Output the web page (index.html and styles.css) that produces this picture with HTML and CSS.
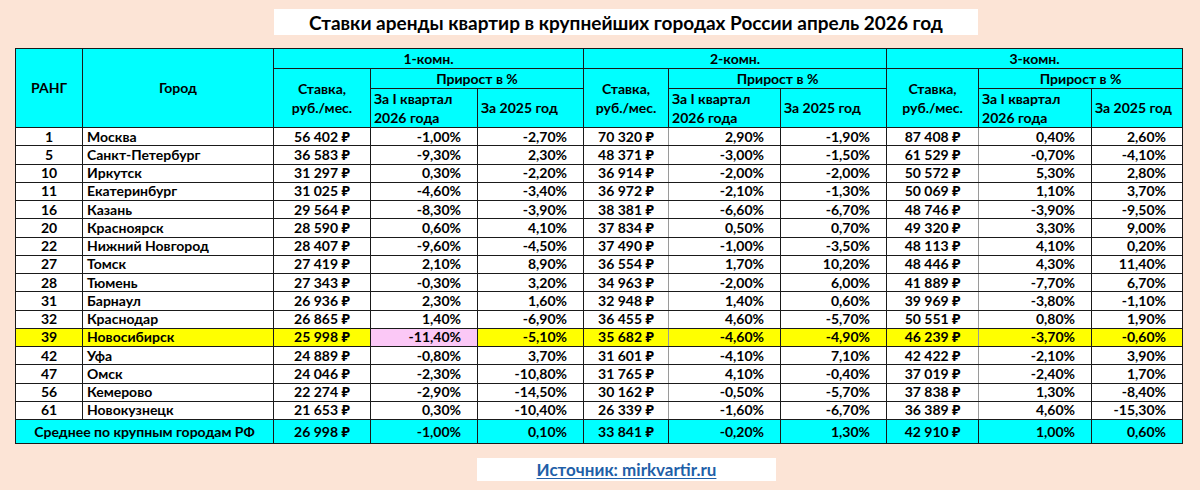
FILE: index.html
```html
<!DOCTYPE html>
<html lang="ru">
<head>
<meta charset="utf-8">
<title>Ставки аренды квартир</title>
<link rel="stylesheet" href="styles.css">
</head>
<body>
<div class="page">
  <div class="title">Ставки аренды квартир в крупнейших городах России апрель 2026 год</div>
  <table class="grid">
    <colgroup>
      <col style="width:67px"><col style="width:191px">
      <col style="width:97px"><col style="width:107px"><col style="width:106px">
      <col style="width:85px"><col style="width:112px"><col style="width:106px">
      <col style="width:92px"><col style="width:113px"><col style="width:91px">
    </colgroup>
    <thead>
      <tr class="h1">
        <th rowspan="3">РАНГ</th>
        <th rowspan="3">Город</th>
        <th colspan="3">1-комн.</th>
        <th colspan="3">2-комн.</th>
        <th colspan="3">3-комн.</th>
      </tr>
      <tr class="h2">
        <th rowspan="2" class="two">Ставка,<br>руб./мес.</th>
        <th colspan="2">Прирост в %</th>
        <th rowspan="2" class="two">Ставка,<br>руб./мес.</th>
        <th colspan="2">Прирост в %</th>
        <th rowspan="2" class="two">Ставка,<br>руб./мес.</th>
        <th colspan="2">Прирост в %</th>
      </tr>
      <tr class="h3">
        <th class="sub two">За I квартал<br>2026 года</th>
        <th class="sub">За 2025 год</th>
        <th class="sub two">За I квартал<br>2026 года</th>
        <th class="sub">За 2025 год</th>
        <th class="sub two">За I квартал<br>2026 года</th>
        <th class="sub">За 2025 год</th>
      </tr>
    </thead>
    <tbody>
      <tr><td class="rank">1</td><td class="city">Москва</td><td class="rate">56 402 ₽</td><td class="num">-1,00%</td><td class="num">-2,70%</td><td class="rate soft">70 320 ₽</td><td class="num">2,90%</td><td class="num">-1,90%</td><td class="rate soft">87 408 ₽</td><td class="num">0,40%</td><td class="num">2,60%</td></tr>
      <tr><td class="rank">5</td><td class="city">Санкт-Петербург</td><td class="rate">36 583 ₽</td><td class="num">-9,30%</td><td class="num">2,30%</td><td class="rate soft">48 371 ₽</td><td class="num">-3,00%</td><td class="num">-1,50%</td><td class="rate soft">61 529 ₽</td><td class="num">-0,70%</td><td class="num">-4,10%</td></tr>
      <tr><td class="rank">10</td><td class="city">Иркутск</td><td class="rate">31 297 ₽</td><td class="num">0,30%</td><td class="num">-2,20%</td><td class="rate soft">36 914 ₽</td><td class="num">-2,00%</td><td class="num">-2,00%</td><td class="rate soft">50 572 ₽</td><td class="num">5,30%</td><td class="num">2,80%</td></tr>
      <tr><td class="rank">11</td><td class="city">Екатеринбург</td><td class="rate">31 025 ₽</td><td class="num">-4,60%</td><td class="num">-3,40%</td><td class="rate soft">36 972 ₽</td><td class="num">-2,10%</td><td class="num">-1,30%</td><td class="rate soft">50 069 ₽</td><td class="num">1,10%</td><td class="num">3,70%</td></tr>
      <tr><td class="rank">16</td><td class="city">Казань</td><td class="rate">29 564 ₽</td><td class="num">-8,30%</td><td class="num">-3,90%</td><td class="rate soft">38 381 ₽</td><td class="num">-6,60%</td><td class="num">-6,70%</td><td class="rate soft">48 746 ₽</td><td class="num">-3,90%</td><td class="num">-9,50%</td></tr>
      <tr><td class="rank">20</td><td class="city">Красноярск</td><td class="rate">28 590 ₽</td><td class="num">0,60%</td><td class="num">4,10%</td><td class="rate soft">37 834 ₽</td><td class="num">0,50%</td><td class="num">0,70%</td><td class="rate soft">49 320 ₽</td><td class="num">3,30%</td><td class="num">9,00%</td></tr>
      <tr><td class="rank">22</td><td class="city">Нижний Новгород</td><td class="rate">28 407 ₽</td><td class="num">-9,60%</td><td class="num">-4,50%</td><td class="rate soft">37 490 ₽</td><td class="num">-1,00%</td><td class="num">-3,50%</td><td class="rate soft">48 113 ₽</td><td class="num">4,10%</td><td class="num">0,20%</td></tr>
      <tr><td class="rank">27</td><td class="city">Томск</td><td class="rate">27 419 ₽</td><td class="num">2,10%</td><td class="num">8,90%</td><td class="rate soft">36 554 ₽</td><td class="num">1,70%</td><td class="num">10,20%</td><td class="rate soft">48 446 ₽</td><td class="num">4,30%</td><td class="num">11,40%</td></tr>
      <tr><td class="rank">28</td><td class="city">Тюмень</td><td class="rate">27 343 ₽</td><td class="num">-0,30%</td><td class="num">3,20%</td><td class="rate soft">34 963 ₽</td><td class="num">-2,00%</td><td class="num">6,00%</td><td class="rate soft">41 889 ₽</td><td class="num">-7,70%</td><td class="num">6,70%</td></tr>
      <tr><td class="rank">31</td><td class="city">Барнаул</td><td class="rate">26 936 ₽</td><td class="num">2,30%</td><td class="num">1,60%</td><td class="rate soft">32 948 ₽</td><td class="num">1,40%</td><td class="num">0,60%</td><td class="rate soft">39 969 ₽</td><td class="num">-3,80%</td><td class="num">-1,10%</td></tr>
      <tr><td class="rank">32</td><td class="city">Краснодар</td><td class="rate">26 865 ₽</td><td class="num">1,40%</td><td class="num">-6,90%</td><td class="rate soft">36 455 ₽</td><td class="num">4,60%</td><td class="num">-5,70%</td><td class="rate soft">50 551 ₽</td><td class="num">0,80%</td><td class="num">1,90%</td></tr>
      <tr class="hl"><td class="rank">39</td><td class="city">Новосибирск</td><td class="rate">25 998 ₽</td><td class="num pink">-11,40%</td><td class="num">-5,10%</td><td class="rate soft">35 682 ₽</td><td class="num">-4,60%</td><td class="num">-4,90%</td><td class="rate soft">46 239 ₽</td><td class="num">-3,70%</td><td class="num">-0,60%</td></tr>
      <tr><td class="rank">42</td><td class="city">Уфа</td><td class="rate">24 889 ₽</td><td class="num">-0,80%</td><td class="num">3,70%</td><td class="rate soft">31 601 ₽</td><td class="num">-4,10%</td><td class="num">7,10%</td><td class="rate soft">42 422 ₽</td><td class="num">-2,10%</td><td class="num">3,90%</td></tr>
      <tr><td class="rank">47</td><td class="city">Омск</td><td class="rate">24 046 ₽</td><td class="num">-2,30%</td><td class="num">-10,80%</td><td class="rate soft">31 765 ₽</td><td class="num">4,10%</td><td class="num">-0,40%</td><td class="rate soft">37 019 ₽</td><td class="num">-2,40%</td><td class="num">1,70%</td></tr>
      <tr><td class="rank">56</td><td class="city">Кемерово</td><td class="rate">22 274 ₽</td><td class="num">-2,90%</td><td class="num">-14,50%</td><td class="rate soft">30 162 ₽</td><td class="num">-0,50%</td><td class="num">-5,70%</td><td class="rate soft">37 838 ₽</td><td class="num">1,30%</td><td class="num">-8,40%</td></tr>
      <tr><td class="rank">61</td><td class="city">Новокузнецк</td><td class="rate">21 653 ₽</td><td class="num">0,30%</td><td class="num">-10,40%</td><td class="rate soft">26 339 ₽</td><td class="num">-1,60%</td><td class="num">-6,70%</td><td class="rate soft">36 389 ₽</td><td class="num">4,60%</td><td class="num">-15,30%</td></tr>
    </tbody>
    <tfoot>
      <tr class="avg"><td colspan="2" class="avgname">Среднее по крупным городам РФ</td><td class="rate">26 998 ₽</td><td class="num">-1,00%</td><td class="num">0,10%</td><td class="rate">33 841 ₽</td><td class="num">-0,20%</td><td class="num">1,30%</td><td class="rate">42 910 ₽</td><td class="num">1,00%</td><td class="num">0,60%</td></tr>
    </tfoot>
  </table>
  <div class="source"><span class="link">Источник: mirkvartir.ru</span></div>
</div>
</body>
</html>
```
FILE: styles.css
```css
html, body {
  margin: 0;
  padding: 0;
}
body {
  background: #fce4d6;
  font-family: Lato, "Noto Sans", sans-serif;
  font-weight: 700;
  color: #000;
}
.page {
  width: 1200px;
  height: 490px;
  padding-top: 9px;
  box-sizing: border-box;
  overflow: hidden;
}
.title {
  margin-left: 274px;
  width: 704px;
  height: 26px;
  background: #fff;
  font-size: 19px;
  line-height: 27px;
  text-align: center;
  white-space: nowrap;
}
.grid {
  margin: 13px 0 0 15px;
  width: 1167px;
  border-collapse: collapse;
  table-layout: fixed;
  font-size: 14px;
  line-height: 16px;
}
.grid th,
.grid td {
  border: 1px solid #1a1a1a;
  padding: 0;
  font-weight: 700;
  white-space: nowrap;
  overflow: hidden;
}
.grid th {
  background: #00ffff;
  text-align: center;
  vertical-align: middle;
}
.grid th.two {
  line-height: 19px;
}
.grid th.sub {
  text-align: left;
  padding-left: 3px;
}
.h1 { height: 20px; }
.h2 { height: 20px; }
.h3 { height: 39px; }
.grid tbody tr {
  height: 18.25px;
  background: #fff;
}
.grid tbody tr.hl {
  background: #ffff00;
}
.grid td.pink {
  background: #fbc8f6;
}
.grid td.rank {
  text-align: center;
}
.grid td.city {
  text-align: left;
  padding-left: 4px;
}
.grid td.rate {
  text-align: center;
}
.grid td.num {
  text-align: right;
  padding-right: 16px;
}
.grid tbody td.rate.soft {
  border-right-color: #9a9a9a;
}
.avg {
  height: 24px;
  background: #00ffff;
}
.grid td.avgname {
  text-align: center;
}
.source {
  margin: 14px 0 0 477px;
  width: 299px;
  height: 23px;
  background: #fff;
  text-align: center;
  font-size: 17px;
  line-height: 24px;
}
.link {
  color: #1f5fa8;
  text-decoration: underline;
  text-decoration-thickness: 1px;
  text-underline-offset: 2px;
}
```
